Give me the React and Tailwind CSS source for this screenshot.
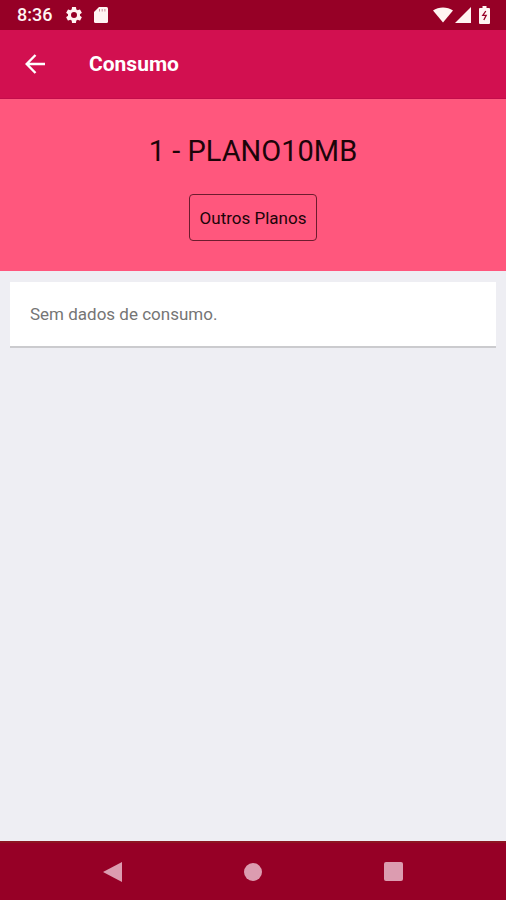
function StatusBar() {
  return (
    <div className="flex h-[30px] shrink-0 items-center justify-between bg-[#960026] pr-4 pl-[17px] text-[#fff4f2]">
      <div className="flex items-center">
        <span className="text-[18px] leading-[30px] font-medium">8:36</span>
        <svg className="ml-3 size-5" viewBox="0 0 24 24" fill="currentColor" aria-hidden="true">
          <path d="M19.14 12.94c.04-.3.06-.61.06-.94 0-.32-.02-.64-.07-.94l2.03-1.58a.49.49 0 0 0 .12-.61l-1.92-3.32a.49.49 0 0 0-.59-.22l-2.39.96c-.5-.38-1.03-.7-1.62-.94l-.36-2.54a.48.48 0 0 0-.48-.41h-3.84c-.24 0-.43.17-.47.41l-.36 2.54c-.59.24-1.13.57-1.62.94l-2.39-.96a.48.48 0 0 0-.59.22L2.74 8.87a.48.48 0 0 0 .12.61l2.03 1.58c-.05.3-.09.63-.09.94s.02.64.07.94l-2.03 1.58a.49.49 0 0 0-.12.61l1.92 3.32c.12.22.37.29.59.22l2.39-.96c.5.38 1.03.7 1.62.94l.36 2.54c.05.24.24.41.48.41h3.84c.24 0 .44-.17.47-.41l.36-2.54c.59-.24 1.13-.56 1.62-.94l2.39.96c.22.08.47 0 .59-.22l1.92-3.32a.48.48 0 0 0-.12-.61zM12 15.6a3.6 3.6 0 1 1 0-7.2 3.6 3.6 0 0 1 0 7.2z" />
        </svg>
        <svg className="ml-[10px] h-4 w-[14px]" viewBox="0 0 14 16" aria-hidden="true">
          <path fill="currentColor" d="M5 0h7.500Q14 0 14 1.500v13Q14 16 12.500 16h-11Q0 16 0 14.500V5z" />
          <path stroke="#c98a98" strokeWidth="1" d="M5.500 2v2.500M8.200 2v2.500M10.900 2v2.500" />
        </svg>
      </div>
      <div className="flex items-center">
        <svg className="h-4 w-5" viewBox="0 0 20 16" fill="currentColor" aria-hidden="true">
          <path d="M10 15.500 0 3.500C5.500-.6 14.500-.6 20 3.500z" />
        </svg>
        <svg className="ml-[2px] size-4" viewBox="0 0 16 16" fill="currentColor" aria-hidden="true">
          <path d="M16 0v16H0z" />
        </svg>
        <svg className="ml-2 h-[18px] w-[11px]" viewBox="0 0 11 18" aria-hidden="true">
          <path fill="currentColor" d="M3.500 0h4v2H10q1 0 1 1v14q0 1-1 1H1q-1 0-1-1V3q0-1 1-1h2.500z" />
          <path fill="none" stroke="#960026" strokeWidth="1.300" d="M6.800 5 3.800 9.300H7.200L4.800 14" />
        </svg>
      </div>
    </div>
  );
}

function AppBar() {
  return (
    <header className="flex h-[69px] shrink-0 items-center border-b border-[#c20d4b] bg-[#d21050] pl-[23px] text-white">
      <button type="button" aria-label="Voltar" className="flex size-6 items-center justify-center">
        <svg className="size-5" viewBox="0 0 20 20" fill="none" stroke="currentColor" strokeWidth="2.400" aria-hidden="true">
          <path d="M20 10H2M10.500 1 1.700 10l8.800 9" />
        </svg>
      </button>
      <h1 className="ml-[42px] text-[21px] leading-6 font-bold">Consumo</h1>
    </header>
  );
}

function NavigationBar() {
  return (
    <nav className="flex h-[59px] shrink-0 items-center justify-center gap-[120px] border-t-2 border-[#8c1522] bg-[#960026] text-[#dc9cb0]">
      <button type="button" aria-label="Anterior" className="flex size-5 items-center justify-center">
        <svg className="size-5" viewBox="0 0 20 20" fill="currentColor" aria-hidden="true">
          <path d="M19 0v20L0 10z" />
        </svg>
      </button>
      <button type="button" aria-label="Início" className="flex size-5 items-center justify-center">
        <span className="size-[18px] rounded-full bg-current" />
      </button>
      <button type="button" aria-label="Recentes" className="flex size-5 items-center justify-center">
        <span className="size-[19px] rounded-[2px] bg-current" />
      </button>
    </nav>
  );
}

export default function App() {
  return (
    <div className="flex min-h-screen flex-col bg-[#eeeef3] font-['Roboto','Noto_Sans',sans-serif]">
      <StatusBar />
      <AppBar />
      <main className="grow">
        <section className="flex flex-col items-center bg-[#ff577d] pt-8 pb-[30px] text-[#1c0409]">
          <h2 className="text-[29px] leading-10">1 - PLANO10MB</h2>
          <button type="button" className="mt-[23px] h-[47px] rounded-[4px] border border-[#6d1c2e] px-[10px] text-[17px] leading-6">
            Outros Planos
          </button>
        </section>
        <section className="mx-[10px] mt-[11px] border-b-2 border-[#cbcbce] bg-white px-5 py-5 text-[#757575]">
          <p className="text-[17px] leading-6">Sem dados de consumo.</p>
        </section>
      </main>
      <NavigationBar />
    </div>
  );
}
